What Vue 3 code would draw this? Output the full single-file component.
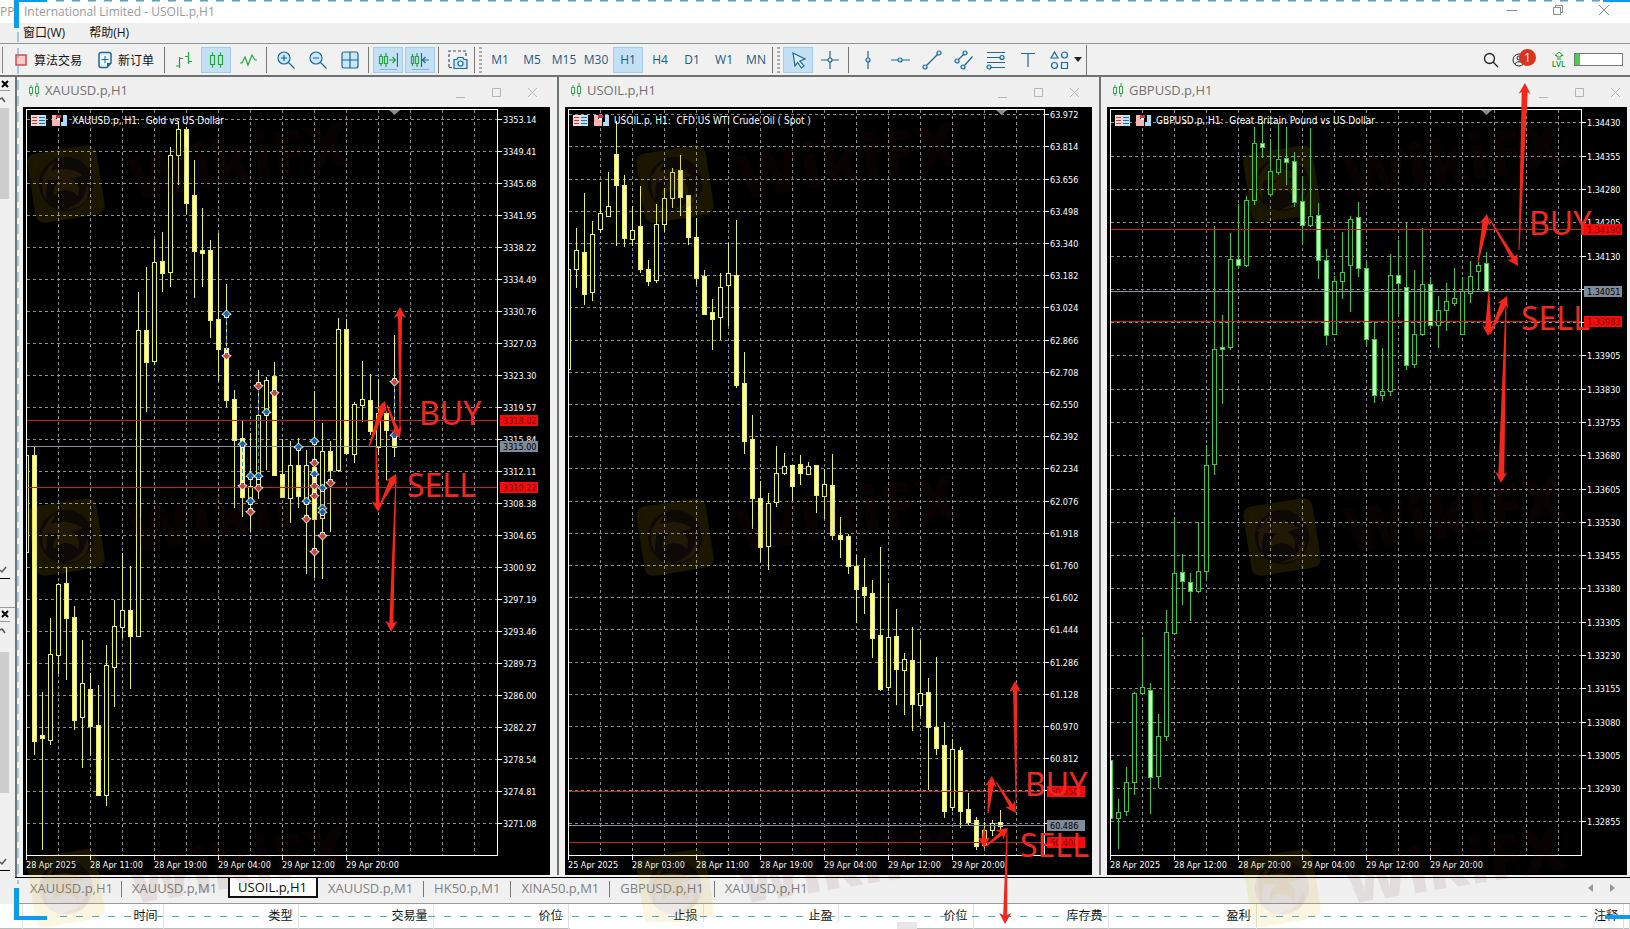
<script setup>
const grid = (start, step, count) => Array.from({ length: count }, (_, i) => Math.floor(start + step * i))

// Candle rows: [x, high, bodyTop, bodyBottom, low, filled]
const charts = [
  {
    id: 'xau', title: 'XAUUSD.p,H1', caption: 'XAUUSD.p, H1:\u00a0 Gold vs US Dollar',
    left: 26, right: 497, edge: 550, tone: 'gold', marker: 394,
    rows: grid(119, 32, 23), top: 3353.14, step: 3.73, digits: 2,
    times: ['28 Apr 2025', '28 Apr 11:00', '28 Apr 19:00', '29 Apr 04:00', '29 Apr 12:00', '29 Apr 20:00'],
    levels: [[420, '3318.02', 'red'], [446, '3315.00', 'gray'], [487, '3310.22', 'red']],
    candles: [
      [26,455,455,552,552,0],[34,447,455,741,755,1],[42,692,735,738,850,1],[50,618,654,740,745,0],[58,583,584,655,674,0],
      [66,567,583,618,680,1],[74,606,617,720,730,1],[82,640,683,717,768,0],[90,673,689,726,756,1],[98,685,725,795,796,1],
      [106,645,665,795,806,0],[114,600,626,667,707,0],[122,553,610,627,638,0],[130,566,610,636,689,1],[138,292,330,636,636,0],
      [146,267,330,362,412,1],[154,239,262,361,365,0],[162,232,261,273,292,1],[170,147,155,272,287,0],[178,121,129,155,185,0],
      [186,127,129,203,214,1],[194,160,195,251,298,1],[202,208,250,253,287,1],[210,240,250,320,338,1],[218,233,319,349,381,1],
      [226,284,348,400,407,1],[234,390,399,440,508,1],[242,421,438,497,517,1],[250,433,486,498,532,0],[258,370,415,487,499,0],
      [266,377,380,412,470,0],[274,362,376,475,475,1],[282,439,474,497,497,1],[290,441,465,498,523,0],[298,438,465,496,508,1],
      [306,450,465,500,574,0],[314,391,467,519,578,1],[322,423,451,518,579,0],[330,441,451,470,532,1],[338,318,329,470,472,0],
      [346,319,329,453,455,1],[354,402,404,454,463,0],[362,361,399,405,422,0],[370,374,400,431,435,1],[378,379,413,447,455,0],
      [386,411,413,430,480,1],[394,335,437,447,457,1]
    ],
    buys: [[226,314],[242,444],[250,476],[258,476],[266,412],[298,447],[314,441],[314,474],[322,488],[250,501],[306,501],[322,508],[322,512],[394,435]],
    sells: [[226,355],[258,385],[274,392],[242,485],[258,487],[314,462],[314,485],[314,495],[330,482],[250,511],[306,518],[314,551],[322,535],[394,381]],
    links: [[226,318,351],[242,448,482],[258,389,472],[394,385,432]]
  },
  {
    id: 'oil', title: 'USOIL.p,H1', caption: 'USOIL.p, H1:\u00a0 CFD US WTI Crude Oil ( Spot )',
    left: 568, right: 1044, edge: 1092, tone: 'gold', marker: 1001,
    rows: grid(114.7, 32.2, 23), top: 63.972, step: 0.158, digits: 3,
    times: ['25 Apr 2025', '28 Apr 03:00', '28 Apr 11:00', '28 Apr 19:00', '29 Apr 04:00', '29 Apr 12:00', '29 Apr 20:00'],
    levels: [[791, '60.650', 'red'], [825, '60.486', 'gray'], [842, '60.400', 'red']],
    candles: [
      [568,269,269,369,369,0],[576,228,250,269,288,0],[584,193,252,294,305,1],[592,221,234,292,301,0],[600,182,213,229,233,0],
      [608,172,206,216,217,0],[616,121,154,185,246,1],[624,175,185,238,247,1],[632,206,230,239,246,0],[640,186,226,269,273,1],
      [648,260,269,281,286,1],[656,204,224,280,283,0],[664,188,198,224,232,0],[672,168,172,198,208,0],[680,155,170,197,216,1],
      [688,195,195,237,245,1],[696,218,237,278,285,1],[704,270,276,314,315,1],[712,299,312,319,350,1],[720,273,287,317,340,0],
      [728,243,273,285,326,0],[736,220,275,385,388,1],[744,352,383,441,454,1],[752,415,439,498,529,1],[760,481,498,547,562,1],
      [768,493,503,546,570,0],[776,446,473,502,507,0],[784,453,466,473,475,0],[792,465,465,486,501,1],[800,455,464,473,485,1],
      [808,462,466,474,475,0],[816,465,465,495,513,1],[824,469,484,496,519,0],[832,454,485,535,540,1],[840,517,535,539,558,1],
      [848,534,536,566,574,1],[856,555,566,589,623,1],[864,558,587,595,614,1],[872,580,593,638,658,1],[880,547,635,689,691,1],
      [888,583,637,687,691,0],[896,609,636,669,705,1],[904,653,659,670,715,0],[912,627,660,704,731,1],[920,640,693,705,716,0],
      [928,678,692,727,790,1],[936,657,727,748,755,1],[944,722,745,811,818,1],[952,739,749,807,811,0],[960,747,750,811,828,1],
      [968,793,809,822,825,1],[976,817,820,846,850,1],[984,822,830,845,848,0],[992,820,823,830,836,0],[1000,810,822,826,830,1]
    ],
    buys: [], sells: [], links: []
  },
  {
    id: 'gbp', title: 'GBPUSD.p,H1', caption: 'GBPUSD.p, H1:\u00a0 Great Britain Pound vs US Dollar',
    left: 1110, right: 1581, edge: 1627, tone: 'green', marker: 1486,
    rows: grid(122.9, 33.29, 22), top: 1.3443, step: 0.00075, digits: 5,
    times: ['28 Apr 2025', '28 Apr 12:00', '28 Apr 20:00', '29 Apr 04:00', '29 Apr 12:00', '29 Apr 20:00'],
    levels: [[229, '1.34190', 'red'], [291, '1.34051', 'gray'], [321, '1.33983', 'red']],
    candles: [
      [1110,760,760,818,818,1],[1118,799,812,818,849,0],[1126,767,782,811,816,0],[1134,692,693,782,795,0],[1142,637,687,693,695,0],
      [1150,683,690,777,814,1],[1158,714,736,776,788,0],[1166,610,632,736,741,0],[1174,517,573,633,634,0],[1182,554,572,581,605,1],
      [1190,573,582,591,621,1],[1198,522,571,591,593,0],[1206,445,465,571,578,0],[1214,226,349,464,475,0],[1222,315,347,349,404,1],
      [1230,233,259,347,350,0],[1238,204,259,265,268,1],[1246,196,200,265,267,0],[1254,127,143,200,205,0],[1262,121,143,147,158,1],
      [1270,139,171,194,197,0],[1278,123,159,172,175,0],[1286,127,158,162,185,1],[1294,152,161,202,207,1],[1302,176,201,225,243,1],
      [1310,128,216,225,227,0],[1318,203,215,260,279,1],[1326,249,260,335,345,1],[1334,276,281,334,334,0],[1342,232,272,281,299,0],
      [1350,216,219,265,312,0],[1358,202,217,268,277,1],[1366,261,268,339,346,1],[1374,322,339,395,403,1],[1382,348,391,395,401,0],
      [1390,254,275,391,396,0],[1398,240,275,283,314,1],[1406,223,287,365,370,1],[1414,270,334,364,368,0],[1422,228,284,334,336,0],
      [1430,277,284,325,327,1],[1438,296,310,325,348,0],[1446,283,301,310,331,0],[1454,268,298,303,306,0],[1462,277,291,334,334,0],
      [1470,261,276,293,303,0],[1478,262,265,271,290,0],[1486,252,263,291,291,1]
    ],
    buys: [], sells: [], links: []
  }
]

const columns = c => Array.from({ length: 14 }, (_, i) => c.left + 32 * (i + 1)).filter(x => x < c.right)
const price = (c, i) => (c.top - c.step * i).toFixed(c.digits)
const originX = c => c.left - 3
// A price tag replaces the scale label that it would cover
const covered = (c, y) => c.levels.some(l => Math.abs(l[0] - y) < 5)

const frames = ['M1', 'M5', 'M15', 'M30', 'H1', 'H4', 'D1', 'W1', 'MN']
const tabs = ['XAUUSD.p,H1', 'XAUUSD.p,M1', 'USOIL.p,H1', 'XAUUSD.p,M1', 'HK50.p,M1', 'XINA50.p,M1', 'GBPUSD.p,H1', 'XAUUSD.p,H1']
const heads = ['时间', '类型', '交易量', '价位', '止损', '止盈', '价位', '库存费', '盈利', '注释']

// Tapered arrow: [tailX, tailY, tipX, tipY, shaft half width]
const arrows = [
  [400, 430, 400, 307, 2], [369, 447, 385, 401, 3], [387, 405, 400, 438, 2], [376, 447, 378, 512, 2], [380, 505, 396, 474, 3], [396, 476, 391, 632, 2],
  [1016, 800, 1015, 681, 2], [988, 813, 992, 776, 3], [996, 782, 1016, 813, 2], [984, 828, 984, 848, 2], [986, 846, 1008, 828, 2], [1007, 830, 1005, 924, 2],
  [1519, 250, 1525, 83, 3], [1478, 262, 1487, 214, 3], [1489, 218, 1518, 266, 2], [1489, 291, 1488, 336, 3], [1490, 334, 1507, 296, 3], [1506, 305, 1501, 483, 3]
]
const arrowPoints = ([x0, y0, x1, y1, w]) => {
  const len = Math.hypot(x1 - x0, y1 - y0)
  const ux = (x1 - x0) / len, uy = (y1 - y0) / len
  const at = (back, side) => `${(x1 - ux * back - uy * side).toFixed(1)},${(y1 - uy * back + ux * side).toFixed(1)}`
  return [at(len, 0.5), at(9, w), at(11, 6), at(0, 0), at(11, -6), at(9, -w), at(len, -0.5)].join(' ')
}
const notes = [[419, 425, 'BUY'], [407, 497, 'SELL'], [1025, 796, 'BUY'], [1020, 857, 'SELL'], [1529, 235, 'BUY'], [1521, 330, 'SELL']]
const stamps = [66, 675, 1282].flatMap(x => [184, 537, 888].map(y => [x, y]))
</script>

<template>
  <div class="app">
    <header class="titlebar">
      <span class="lead">PP</span>
      <span class="name">International Limited - USOIL.p,H1</span>
      <div class="win-buttons">
        <button aria-label="Minimize"><svg width="12" height="12"><path d="M1 6.500h10" /></svg></button>
        <button aria-label="Restore"><svg width="12" height="12"><path d="M1.500 3.500h7v7h-7zM3.500 3.500v-2h7v7h-2" /></svg></button>
        <button aria-label="Close"><svg width="12" height="12"><path d="M1 1l10 10M11 1L1 11" /></svg></button>
      </div>
    </header>

    <nav class="menubar">
      <button>窗口(W)</button>
      <button>帮助(H)</button>
    </nav>

    <div class="toolbar">
      <i class="edge"></i>
      <button class="wide algo"><svg width="12" height="12"><rect x="1" y="1" width="10" height="10" fill="#ffc9c9" stroke="#cf4a52" stroke-width="1.500" /></svg>算法交易</button>
      <button class="wide order"><svg width="14" height="18"><path d="M3 1.500h8a2 2 0 0 1 2 2V12l-4 4.500H3a2 2 0 0 1-2-2v-11a2 2 0 0 1 2-2z" fill="#e9f4fb" stroke="#1f6794" stroke-width="1.500" /><path d="M9 16.500V12h4z" fill="#1f6794" /><path d="M7 5v7M3.500 8.500h7" stroke="#1f6794" /></svg>新订单</button>
      <i class="sep"></i>
      <button class="tool" aria-label="Bar chart"><svg class="g" width="20" height="20"><path d="M2 16h3M5.500 7v11M5 8.500h4M11 6.500h4M14.500 2v12M15 11.500h3" /></svg></button>
      <button class="tool on" aria-label="Candlesticks"><svg class="g" width="20" height="20"><path d="M4.500 5.500h4v9h-4zM6.500 2.500v3M6.500 14.500v3M12.500 5.500h4v9h-4zM14.500 2.500v3M14.500 14.500v3" /></svg></button>
      <button class="tool" aria-label="Line chart"><svg class="g" width="20" height="20"><path d="M2 13h2l3-6 3 8 4-10 3 5h2" /></svg></button>
      <i class="sep"></i>
      <button class="tool" aria-label="Zoom in"><svg width="20" height="20"><circle cx="8" cy="8" r="6" fill="#c9e9fb" /><path d="M8 5v6M5 8h6M12.500 12.500l6 6" /></svg></button>
      <button class="tool" aria-label="Zoom out"><svg width="20" height="20"><circle cx="8" cy="8" r="6" fill="#c9e9fb" /><path d="M5 8h6M12.500 12.500l6 6" /></svg></button>
      <button class="tool" aria-label="Tile windows"><svg width="20" height="20"><rect x="2" y="2" width="16" height="16" rx="2" fill="#c9e9fb" /><path d="M10 2v16M2 10h16" /></svg></button>
      <i class="sep"></i>
      <button class="tool on" aria-label="Auto scroll"><svg class="g" width="20" height="20"><path d="M1.500 6.500h3v7h-3zM3 4v2M3 14v2M6.500 6.500h3v7h-3zM8 3v3M8 14v3M11 10h6M14.500 7l3 3-3 3" /><path d="M19.500 3v14" stroke="#1f6794" /><path d="M2 19.500h17" stroke="#8fb4cc" /></svg></button>
      <button class="tool on" aria-label="Chart shift"><svg class="g" width="20" height="20"><path d="M1.500 6.500h2v7h-2zM2.500 4v2M2.500 14v2M5.500 6.500h3v7h-3zM7 3v3M7 14v3" /><path d="M11.500 3v14M19 10h-6M15.500 7l-3 3 3 3" stroke="#1f6794" /><path d="M2 19.500h17" stroke="#8fb4cc" /></svg></button>
      <i class="sep"></i>
      <button class="tool" aria-label="Screenshot"><svg width="20" height="20"><path d="M1 17V1h17v5M1 17.500h3" stroke-dasharray="3 2" stroke="#44525c" /><path d="M6 9.500h3l1-2h5l1 2h3v9H6z" fill="#c9e9fb" /><circle cx="12.500" cy="13.500" r="2.500" fill="#fff" /></svg></button>
      <i class="grip"></i>
      <button v-for="f in frames" :key="f" class="tool frame" :class="{ on: f === 'H1' }">{{ f }}</button>
      <i class="grip"></i>
      <button class="tool on" aria-label="Cursor"><svg width="20" height="20"><path d="M5 3l12 6-5 2 4 5-2.500 2-4-5.500L7 16z" fill="#d8effc" /></svg></button>
      <button class="tool" aria-label="Crosshair"><svg width="20" height="20"><circle cx="10" cy="10" r="2" /><path d="M10 1v7M10 12v7M1 10h7M12 10h7" /></svg></button>
      <i class="sep"></i>
      <button class="tool" aria-label="Vertical line"><svg width="20" height="20"><circle cx="10" cy="10" r="2" fill="#c9e9fb" /><path d="M10 1v7M10 12v7" /></svg></button>
      <button class="tool" aria-label="Horizontal line"><svg width="20" height="20"><circle cx="10" cy="10" r="2" fill="#c9e9fb" /><path d="M1 10h7M12 10h8" /></svg></button>
      <button class="tool" aria-label="Trend line"><svg width="20" height="20"><circle cx="3" cy="17" r="2" fill="#c9e9fb" /><circle cx="17" cy="3" r="2" fill="#c9e9fb" /><path d="M4.500 15.500l11-11" /></svg></button>
      <button class="tool" aria-label="Channel"><svg width="20" height="20"><circle cx="3" cy="11" r="2" fill="#c9e9fb" /><circle cx="11" cy="3" r="2" fill="#c9e9fb" /><circle cx="9" cy="17" r="2" fill="#c9e9fb" /><path d="M4.500 9.500l5-5M10.500 15.500l8-9" /></svg></button>
      <button class="tool" aria-label="Fibonacci"><svg width="20" height="20"><path d="M1 2.500h18M1 7.500h13M1 12.500h18M5 17.500h14" /><circle cx="16" cy="7.500" r="2" fill="#c9e9fb" /><circle cx="3" cy="17" r="2" fill="#c9e9fb" /></svg></button>
      <button class="tool" aria-label="Text"><svg width="20" height="20"><path d="M3 3.500h14M10 3.500V17" /></svg></button>
      <button class="tool" aria-label="Shapes"><svg width="20" height="20"><path d="M4.500 2L8 8H1zM11.500 12.500h6v6h-6z" fill="#d8effc" /><circle cx="14.500" cy="5" r="3" fill="#d8effc" /><circle cx="4.500" cy="15.500" r="3" fill="#d8effc" /></svg></button>
      <svg class="caret" width="8" height="5"><path d="M0 0h8L4 5z" /></svg>
      <i class="sep last"></i>
      <div class="right">
        <button aria-label="Search"><svg width="16" height="16" fill="none" stroke="#222" stroke-width="1.300"><circle cx="6.500" cy="6.500" r="5" /><path d="M10 10l5 5" /></svg></button>
        <button class="user" aria-label="Notifications"><svg width="14" height="14" fill="none" stroke="#222"><circle cx="7" cy="7" r="6" /><circle cx="7" cy="5" r="2" /><path d="M3 11c1-3 7-3 8 0" /></svg><b>1</b></button>
        <span class="lvl"><svg width="10" height="9"><path d="M5 1L9 4.500H7V6H3V4.500H1zM3 8h4" fill="none" stroke="#21a038" /></svg>LVL</span>
        <span class="meter"><i></i></span>
      </div>
    </div>

    <main class="workspace">
      <aside class="side">
        <section v-for="n in 2" :key="n" :class="'panel p' + n">
          <button class="x" aria-label="Close panel"><svg width="8" height="8"><path d="M1 1l6 6M7 1L1 7" stroke="#000" stroke-width="2" /></svg></button>
          <div class="scroll">
            <svg width="9" height="6"><path d="M0 2l2-1 3 4" fill="none" stroke="#555" stroke-width="1.500" /></svg>
            <div class="thumb"></div>
            <svg class="down" width="9" height="8"><path d="M0 4l2 2 4-5" fill="none" stroke="#555" stroke-width="1.500" /></svg>
          </div>
        </section>
      </aside>

      <div class="windows">
        <section v-for="c in charts" :key="c.id" class="window" :class="c.id">
          <div class="wbar">
            <svg width="12" height="14"><path d="M1.500 4.500h3v6h-3zM3 2v2M3 11v2M7.500 3.500h3v7h-3zM9 0v3M9 11v3" fill="none" stroke="#2aa84a" /></svg>
            <h2>{{ c.title }}</h2>
            <div class="wctl">
              <button aria-label="Minimize"><svg width="10" height="10"><path d="M0 9.500h9" /></svg></button>
              <button aria-label="Maximize"><svg width="10" height="10"><path d="M.5.5h8v8h-8z" /></svg></button>
              <button aria-label="Close"><svg width="10" height="10"><path d="M0 0l9 9M9 0L0 9" /></svg></button>
            </div>
          </div>
          <svg class="chart" :class="c.tone" :viewBox="`${originX(c)} 107 ${c.edge - originX(c)} 768`">
            <rect :x="originX(c)" y="107" :width="c.edge - originX(c)" height="768" fill="#000" />
            <g class="gridlines">
              <line v-for="y in c.rows" :key="'h' + y" :x1="c.left + 1" :x2="c.right" :y1="y + 0.5" :y2="y + 0.5" />
              <line v-for="x in columns(c)" :key="'v' + x" :x1="x + 0.5" :x2="x + 0.5" y1="110" y2="855" />
            </g>
            <g class="candles">
              <g v-for="k in c.candles" :key="k[0]">
                <rect class="wick" :x="k[0]" :y="k[1]" width="1" :height="Math.max(0, k[2] - k[1])" />
                <rect class="wick" :x="k[0]" :y="k[3]" width="1" :height="Math.max(0, k[4] - k[3])" />
                <rect :class="k[5] ? 'full' : 'hollow'" :x="Math.max(k[0] - 1.5, c.left + 0.5)" :y="k[2] + 0.5" :width="k[0] === c.left ? 2 : 4" :height="Math.max(2, k[3] - k[2])" />
              </g>
            </g>
            <g class="levels">
              <rect v-for="l in c.levels" :key="l[0]" :class="l[2]" :x="c.left + 1" :y="l[0]" :width="c.right - c.left" height="1" />
            </g>
            <line v-for="l in c.links" :key="l.join()" class="link" :x1="l[0] + 0.5" :x2="l[0] + 0.5" :y1="l[1]" :y2="l[2]" />
            <path v-for="m in c.buys" :key="'b' + m.join()" class="mark buy" :d="`M${m[0] + 0.5} ${m[1] - 4}l4.500 4.500-2.500 1v2h-4v-2l-2.500-1z`" />
            <path v-for="m in c.sells" :key="'s' + m.join()" class="mark sell" :d="`M${m[0] + 0.5} ${m[1] + 5}l4.500-4.500-2.500-1v-2h-4v2l-2.500 1z`" />
            <path class="frameline" :d="`M${c.left + 0.5} 859.500V109.500H${c.right + 0.5}V855.500H${c.left + 0.5}`" />
            <path :d="`M${c.marker - 5} 110h11l-5.500 5z`" fill="#8a8a90" />
            <g class="axis">
              <template v-for="(y, i) in c.rows" :key="y">
                <rect :x="c.right" :y="y" width="5" height="1" />
                <text v-if="!covered(c, y)" :x="c.right + 6" :y="y + 4">{{ price(c, i) }}</text>
              </template>
              <template v-for="(t, i) in c.times" :key="t">
                <rect :x="c.left + 64 * i" y="855" width="1" height="5" />
                <text :x="c.left + 64 * i" y="868">{{ t }}</text>
              </template>
            </g>
            <g class="badges">
              <g v-for="l in c.levels" :key="l[1]" :class="l[2]">
                <rect :x="c.right + 3" :y="l[0] - 5" width="38" height="11" />
                <text :x="c.right + 6" :y="l[0] + 4">{{ l[1] }}</text>
              </g>
            </g>
            <svg :x="c.left + 5" y="114" width="37" height="13">
              <rect x="0" y="1" width="15" height="11" fill="#f6d9d9" />
              <rect x="8" y="1" width="7" height="11" fill="#bfe4fa" />
              <path d="M1 3.500h5M1 6.500h5M1 9.500h5" stroke="#c8383c" />
              <path d="M8 3.500h6M8 6.500h6M8 9.500h6" stroke="#1f6fa5" />
              <path d="M21 1h4v4h4v7h-8z" fill="#f5b5b5" /><path d="M25 1h5v3h-5z" fill="#c8383c" /><path d="M36 1v11h-6V8h2V1z" fill="#a9dcfa" /><path d="M26 4h3v2h-3z" fill="#fff" />
            </svg>
            <text class="caption" :x="c.left + 46" y="124">{{ c.caption }}</text>
          </svg>
        </section>
      </div>
    </main>

    <nav class="tabs">
      <button v-for="(t, i) in tabs" :key="i" :class="{ active: i === 2, before: i === 1 }">{{ t }}</button>
      <div class="scrollers">
        <button aria-label="Scroll left"><svg width="5" height="8"><path d="M5 0v8L0 4z" /></svg></button>
        <button aria-label="Scroll right"><svg width="5" height="8"><path d="M0 0v8l5-4z" /></svg></button>
      </div>
    </nav>

    <table class="trades">
      <colgroup>
        <col class="c-edge" /><col class="c-first" /><col v-for="n in 7" :key="n" class="c-mid" /><col class="c-profit" /><col /><col class="c-end" />
      </colgroup>
      <thead>
        <tr><td></td><th v-for="(h, i) in heads" :key="i" scope="col">{{ h }}</th><td></td></tr>
      </thead>
    </table>

    <svg class="overlay" viewBox="0 0 1630 929" aria-hidden="true">
      <g v-for="s in stamps" :key="s.join()" :transform="`translate(${s[0]} ${s[1]}) rotate(-9)`">
        <path fill-rule="evenodd" fill="#e0b400" fill-opacity=".12" d="M-26-35h52a9 9 0 0 1 9 9v52a9 9 0 0 1-9 9h-52a9 9 0 0 1-9-9v-52a9 9 0 0 1 9-9zM0-27a27 27 0 1 0 0 54a27 27 0 1 0 0-54z" />
        <circle r="27" fill="#6a4a30" fill-opacity=".12" />
        <path fill="#d8a800" fill-opacity=".1" d="M-24-10C-14-18 6-18 18-6L6-4c6 4 8 10 4 18C4 4-8 4-14 10c0-8 4-12 10-14-8-2-14-2-20-6zM-8 24C4 26 18 18 20 4 26 18 10 30-8 24zM-22 12C-28-2-20-20-6-24-14-16-20-4-22 12z" />
        <text class="brand" x="62" y="26">WikiFX</text>
      </g>
      <path class="dash" d="M56 .5H1600" stroke-dasharray="8 8" stroke-width="2" />
      <path class="dash" d="M18 32V884" stroke-dasharray="10 6" />
      <path class="dash" d="M60 916.500H1600" stroke-dasharray="7 9" />
      <path class="corner" d="M14 0h33v2H19v26h-5zM14 888h5v28h28v4H14zM1603 0h27v2h-27zM1605 915h25v4h-25z" />
      <rect x="570" y="922" width="347" height="7" fill="#fff" />
      <path d="M897 922h20v7h-20z" fill="#e6e6e6" />
      <polygon v-for="a in arrows" :key="a.join()" class="arrow" :points="arrowPoints(a)" />
      <text v-for="n in notes" :key="n.join()" class="note" :x="n[0]" :y="n[1]">{{ n[2] }}</text>
    </svg>
  </div>
</template>

<style>
body { background: #f0f0f0; overflow: hidden; }
</style>

<style scoped>
.app { position: relative; display: flex; flex-direction: column; background: #f0f0f0; color: #111; font-family: "Open Sans", "Noto Sans", "Noto Sans CJK SC", sans-serif; font-size: 12px; }
button { font: inherit; color: inherit; background: none; border: 0; padding: 0; margin: 0; display: flex; align-items: center; justify-content: center; white-space: nowrap; }
i { font-style: normal; }

.titlebar { height: 23px; display: flex; align-items: center; background: #fff; color: #999; font-size: 12px; }
.lead { width: 24px; flex: none; }
.win-buttons { margin-left: auto; display: flex; gap: 34px; padding: 0 20px 4px 0; }
.win-buttons svg { fill: none; stroke: #8a8a8a; }

.menubar { height: 20px; display: flex; align-items: center; gap: 24px; padding: 0 0 2px 23px; box-sizing: border-box; height: 21px; border-bottom: 1px solid #8f9494; color: #111; }

.toolbar { height: 31px; display: flex; align-items: center; background: #f1f1f1; }
.edge { width: 1px; height: 26px; margin: 0 1px 0 2px; background: #888; }
.wide { height: 26px; }
.algo { padding-left: 11px; gap: 7px; }
.order { padding: 0 8px 0 16px; gap: 6px; }
.sep { width: 1px; height: 26px; margin: 0 3px 0 2px; background: #777; flex: none; }
.sep.last { margin-left: 4px; height: 30px; }
.grip { width: 3px; height: 26px; margin-right: 2px; padding-left: 4px; border-left: 1px solid #777; background: repeating-linear-gradient(#aaa 0 2px, #f1f1f1 2px 4px) content-box; flex: none; }
.tool { width: 30px; height: 26px; margin: 0 1px; flex: none; box-sizing: border-box; }
.tool svg { fill: none; stroke: #1f6794; stroke-width: 1.2; }
.tool svg.g { stroke: #26a53c; }
.tool.on { background: #c3e0f5; border: 1px solid #a3cdea; }
.frame { color: #245a80; }
.caret { margin-left: -2px; fill: #222; }
.right { margin-left: auto; display: flex; align-items: center; padding-right: 7px; }
.user { position: relative; margin-left: 13px; width: 24px; justify-content: flex-start; }
.user b { position: absolute; left: 7px; top: -4px; width: 17px; height: 17px; border-radius: 50%; background: #dc3220; color: #fff; font-size: 12px; line-height: 17px; font-weight: 400; }
.lvl { margin-left: 15px; width: 15px; display: flex; flex-direction: column; align-items: center; color: #149a2e; font-size: 8px; line-height: 8px; font-weight: 600; }
.meter { margin-left: 8px; width: 47px; height: 11px; border: 1px solid #777; background: #fff; display: flex; }
.meter i { width: 5px; background: #48cf48; }

.workspace { display: flex; border-top: 2px solid #6d7270; }
.side { width: 15px; flex: none; display: flex; flex-direction: column; border-right: 2px solid #6e7474; }
.panel { display: flex; flex-direction: column; }
.p1 { flex: 529; border-bottom: 1px solid #999; }
.p2 { flex: 269; }
.x { width: 10px; height: 14px; border-bottom: 1px solid #999; }
.scroll { flex: 1; width: 10px; display: flex; flex-direction: column; border-bottom: 1px solid #000; margin-bottom: 6px; }
.p1 .scroll { margin-bottom: 28px; }
.scroll > svg { margin-top: 6px; flex: none; }
.thumb { width: 9px; height: 91px; margin-top: 5px; background: #cdcdcd; }
.p2 .thumb { height: 141px; margin-top: 18px; }
.scroll > .down { margin: auto 0 4px; }

.windows { flex: 1; display: grid; grid-template-columns: 542fr 542fr 529fr; padding-bottom: 2px; }
.window { padding: 0 7px 0 6px; border-right: 2px solid #6e7474; min-width: 0; }
.window.gbp { padding-right: 3px; border-right: 0; }
.wbar { height: 30px; display: flex; align-items: center; padding: 0 12px 0 5px; }
.gbp .wbar { padding-right: 6px; }
.wbar h2 { margin: 0 0 0 5px; padding-bottom: 4px; font-size: 13px; font-weight: 400; color: #707070; line-height: 20px; }
.wbar > svg { margin-bottom: 5px; }
.wctl { margin-left: auto; display: flex; gap: 26px; padding-top: 2px; }
.wctl svg { fill: none; stroke: #b4b4b4; }
.chart { display: block; width: 100%; height: auto; font-family: "DejaVu Sans Condensed", "DejaVu Sans", sans-serif; font-size: 9px; }
.gridlines line { stroke: #8b8f8f; stroke-dasharray: 3 3; shape-rendering: crispEdges; }
.candles, .levels, .axis rect, .badges rect, .frameline { shape-rendering: crispEdges; }
.frameline { fill: none; stroke: #fff; }
.gold { --line: #e8ee62; --fill: #ffffb0; }
.green { --line: #3fc63f; --fill: #c8ffc8; }
.wick { fill: var(--line); }
.hollow { fill: #000; stroke: var(--line); }
.full { fill: var(--fill); stroke: var(--line); }
.levels .red { fill: #c81e1e; }
.levels .gray { fill: #8a93a0; }
.axis { fill: #fff; }
.caption { fill: #fff; font-size: 10px; }
.badges .red rect { fill: #f50b0b; }
.badges .red text { fill: #7a0000; }
.badges .gray rect { fill: #7f8b99; }
.badges .gray text { fill: #000; }
.mark { stroke: #fff; stroke-width: 1; }
.buy { fill: #1668a8; }
.sell { fill: #cc4636; }
.link { stroke: #3f86c0; stroke-dasharray: 4 3; }

.tabs { height: 25px; margin-left: 15px; display: flex; align-items: flex-start; border-top: 1px solid #000; border-bottom: 1px solid #999; font-size: 13px; color: #808080; }
.tabs > button { height: 20px; padding: 0 11px 0 10px; position: relative; }
.tabs > button:first-child { padding: 0 9px 0 15px; }
.tabs > button:not(.active):not(.before)::after { content: ""; position: absolute; right: 0; top: 3px; height: 16px; width: 1px; background: #777; }
.tabs > button:nth-last-child(2)::after { visibility: hidden; }
.tabs > .active { background: #fff; color: #111; border: 2px solid #111; border-top: 0; padding: 0 9px 0 8px; box-sizing: border-box; }
.scrollers { margin-left: auto; display: flex; gap: 17px; padding: 6px 15px 0 0; }
.scrollers svg { fill: #999; }

.trades { width: 100%; height: 25px; table-layout: fixed; border-collapse: collapse; background: #fff; border-bottom: 1px solid #bbb; }
.trades th { font-weight: 400; text-align: right; padding: 0 5px 0 0; border-right: 1px solid #e2e2e2; line-height: 16px; }
.trades td { padding: 0; border-right: 1px solid #e2e2e2; }
.c-edge { width: 22px; }
.c-first { width: 141px; }
.c-mid { width: 135px; }
.c-profit { width: 148px; }
.c-end { width: 6px; }

.overlay { position: absolute; left: 0; top: 0; width: 100%; height: auto; pointer-events: none; }
.dash { fill: none; stroke: #5aa2c0; }
.corner { fill: #0c9cec; }
.arrow { fill: #f5261b; }
.note { fill: #ee2a20; font-family: "Noto Sans", sans-serif; font-size: 32px; }
.brand { fill: #581c14; fill-opacity: .09; font-size: 62px; font-weight: 800; }
</style>
